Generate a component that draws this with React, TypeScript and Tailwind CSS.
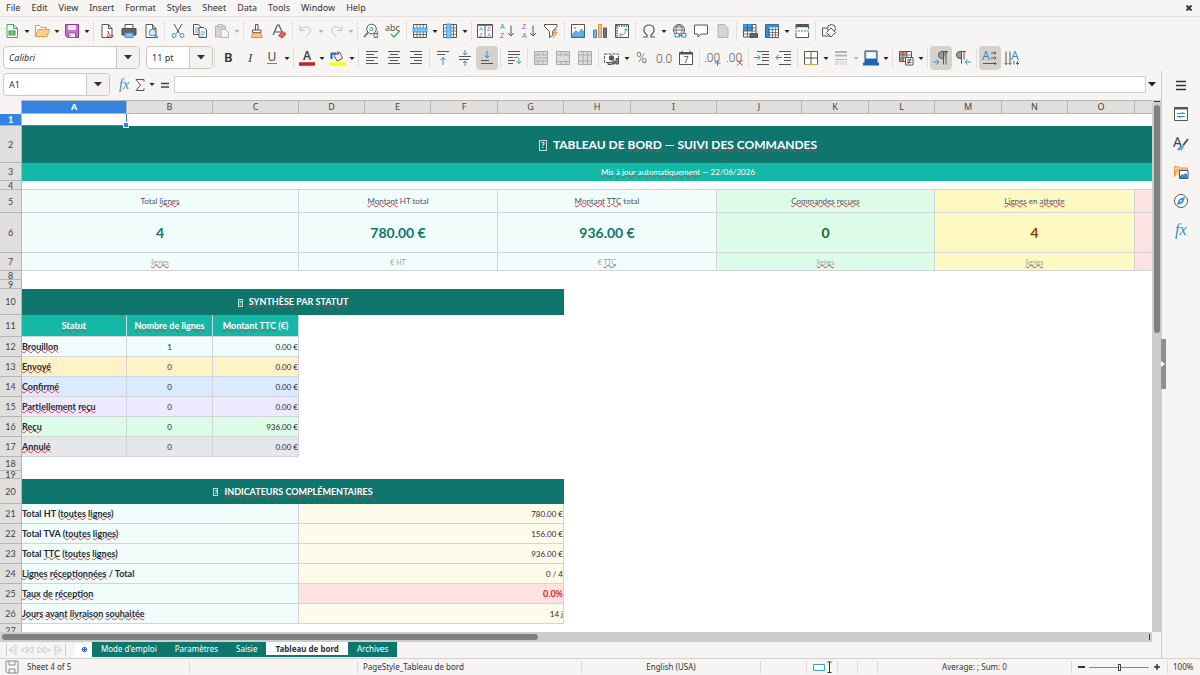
import React from "react";

const ink = "#555555";
const blue = "#2f8fd8";
const lines = (ys: number[], x1 = 2, x2 = 14, color = ink) =>
  ys.map((y) => <path key={y} d={`M${x1} ${y}H${x2}`} stroke={color} />);

const Letter = ({ x, y, size = 8, fill = ink, bold = false, children }: { x: number, y: number, size?: number, fill?: string, bold?: boolean, children: string }) => (
  <text x={x} y={y} fontSize={size} fill={fill} stroke="none" fontFamily="Noto Sans" fontWeight={bold ? 600 : 400}>{children}</text>
);

const SortLetter = ({ x, y, fill, size = 7, children }: { x: number, y: number, fill: string, size?: number, children: string }) => (
  <text x={x} y={y} fontSize={size} fill={fill} stroke="none" fontFamily="Liberation Sans">{children}</text>
);

const icons: Record<string, React.ReactNode> = {
  new: <><path d="M3 1.500h6.500l4 4v9H3z" fill="#fff" stroke="#3faa5c" /><path d="M9.500 1.500v4h4" stroke="#3faa5c" /><path d="M4.500 7.500h7v5h-7z" fill="#2c9a4b" stroke="none" /><path d="M5 9.200h6M5 11h6M8 8v4.500" stroke="#bfe8c9" strokeWidth=".6" /></>,
  open: <><path d="M1.500 13.500v-11h4l1.500 2h5.500v3" fill="#fff" stroke="#e39a43" /><path d="M1.500 13.500l2.500-7h11.500l-2.500 7z" fill="#fbd08f" stroke="#e8a048" /></>,
  save: <><path d="M1.500 1.500h13v13h-11l-2-2z" fill="#c572cf" stroke="#8c3a99" /><path d="M4 2h8v5H4z" fill="#f3e3f5" stroke="none" /><path d="M4.500 10h7v4.500h-7z" fill="#fff" stroke="#8c3a99" strokeWidth=".8" /><path d="M6 11.500v2" stroke="#8c3a99" /></>,
  pdf: <><path d="M3 1.500h6.500l3.500 4v9H3z" fill="#fff" /><path d="M9.500 1.500v4H13" /><path d="M7 15c2-1.500 2.500-5 2-7 1 4 3 5 5.500 5-3-.8-5 .2-7.500 2z" stroke="#e0444c" /></>,
  print: <><path d="M4 5V1.500h8V5" fill="#fff" /><path d="M1 5.500h14v6.500H1z" fill="#5c6670" stroke="#4a4a4a" /><path d="M4 10h8v4.500H4z" fill="#8fc3ea" stroke={blue} /></>,
  preview: <><path d="M3 1.500h6.500l3.500 4v9H3z" fill="#fff" /><path d="M9.500 1.500v4H13" /><circle cx="9.500" cy="9.500" r="3.300" stroke={blue} fill="#d6ebfa" /><path d="M12 12l3 3" stroke={blue} strokeWidth="1.400" /></>,
  cut: <><path d="M4 1l5.500 9.500M12 1L6.500 10.500" /><circle cx="4" cy="12.500" r="2" stroke={blue} /><circle cx="12" cy="12.500" r="2" stroke={blue} /></>,
  copy: <><path d="M1.500 1.500h5l2.500 2.500v7.500H1.500z" fill="#fff" /><path d="M3 5h4M3 7h4M3 9h3" stroke={blue} strokeWidth=".8" /><path d="M7 4.500h5l2.500 2.500v7.500H7z" fill="#fff" /><path d="M8.500 9h4.500M8.500 11h4.500M8.500 13h3" stroke={blue} strokeWidth=".8" /></>,
  paste: <><path d="M1.500 3h10v11h-10z" fill="#d5d5d5" stroke="#b5b5b5" /><path d="M4.500 1.500h4v2.500h-4z" fill="#eee" stroke="#b5b5b5" /><path d="M7 6.500h4.500l3 3v5H7z" fill="#f4f4f4" stroke="#b5b5b5" /></>,
  clone: <><path d="M6.500 7V1.500h2.500V7" fill="#fff" /><path d="M3.500 7h8.500v2.500H3.500z" fill="#fff" /><path d="M3.500 10h8.500l1 4.500H2.500z" fill="#fbc582" stroke="#e08f35" /></>,
  clear: <><path d="M2 12L6.500 2h1.500l3.500 8M4 9h6" strokeWidth="1.200" /><path d="M7.500 12.500l4-4 3.500 2.500-4 4z" fill="#ee5a5f" stroke="#d8333c" /></>,
  undo: <path d="M2 2.500v5h5M2.500 7C6 2 12.500 3.500 12.500 7.500c0 3-3.500 4.500-5 6.500" stroke="#c4c4c4" />,
  redo: <path d="M14 2.500v5H9M13.500 7C10 2 3.500 3.500 3.500 7.500c0 3 3.500 4.500 5 6.500" stroke="#c4c4c4" />,
  find: <><circle cx="8.500" cy="6" r="4.800" fill="#fff" /><path d="M5 9.500L1 14" strokeWidth="1.300" /><SortLetter x={6} y={8} size={8} fill={blue}>a</SortLetter><Letter x={10} y={15} size={9}>d</Letter></>,
  spell: <><Letter x={0} y={8} size={9}>abc</Letter><path d="M6 11l3 3 5.500-6" stroke="#2fb56a" strokeWidth="1.500" /></>,
  row: <><path d="M1.500 1.500h13v13h-13z" fill="#fff" /><path d="M5 1.500v13M8 1.500v13M11.300 1.500v13M1.500 11.500h13" strokeWidth=".8" /><path d="M1 5h14v4H1z" fill="#7fc1f0" stroke={blue} strokeWidth=".8" /></>,
  col: <><path d="M1.500 1.500h13v13h-13z" fill="#fff" /><path d="M1.500 5h13M1.500 8h13M1.500 11.300h13M11.500 1.500v13" strokeWidth=".8" /><path d="M4.500 1h4.500v14H4.500z" fill="#7fc1f0" stroke={blue} strokeWidth=".8" /></>,
  sort: <><path d="M.5 1.500h15v13H.5zM8 1.500v13" fill="#fff" /><path d="M.5 2h15" strokeWidth="1.600" /><SortLetter x={2} y={7.500} size={6} fill={blue}>A</SortLetter><SortLetter x={10} y={7.500} size={6} fill="#b045c8">Z</SortLetter><SortLetter x={2} y={14} size={6} fill="#b045c8">Z</SortLetter><SortLetter x={10} y={14} size={6} fill={blue}>A</SortLetter></>,
  asc: <><SortLetter x={1} y={6} fill={blue}>A</SortLetter><SortLetter x={1} y={15} fill="#b045c8">Z</SortLetter><path d="M12 2.500v10.500M9 10l3 3 3-3" /></>,
  desc: <><SortLetter x={1} y={6} fill="#b045c8">Z</SortLetter><SortLetter x={1} y={15} fill={blue}>A</SortLetter><path d="M12 2.500v10.500M9 10l3 3 3-3" /></>,
  filter: <><path d="M1.500 1.500h12.500v2l-4.500 5v4l-3 2v-6l-5-5z" fill="#fff" /><path d="M12.500 6.500L9 11h2.500L10 15l4.500-5.500H12l2-3z" fill="#f5a742" stroke="#e08f35" strokeWidth=".5" /></>,
  image: <><path d="M1.500 1.500h13v13h-13z" fill="#fff" /><circle cx="5" cy="5" r="1.300" fill="#f5a742" stroke="none" /><path d="M2 14v-2.500l4-4 2.500 2.500 3-4L14 9v5z" fill="#67aee4" stroke={blue} strokeWidth=".7" /></>,
  chart: <><path d="M1.500 7h3v7.500h-3z" fill="#6bb4ea" stroke={blue} /><path d="M6.500 1.500h3v13h-3z" fill="#fac27a" stroke="#e08f35" /><path d="M11.500 5h3v9.500h-3z" fill="#777" /></>,
  pivot: <><path d="M1.500 1.500h13v13h-13z" fill="#fff" /><path d="M2 3h12M3 2v12" strokeWidth="1.500" strokeDasharray="1.500 1" /><path d="M6 12c4 0 6-2 6-6M10.500 7.500L12 5.500l1.800 2M7.500 10.500L5.500 12l2 1.800" stroke={blue} /></>,
  omega: <path d="M2 14h4v-2C1 8.500 2.500 2 8 2s7 6.500 2 10v2h4" strokeWidth="1.200" />,
  link: <><circle cx="8" cy="7" r="5.500" /><path d="M2.500 7h11M8 1.500c-4 3-4 8 0 11M8 1.500c4 3 4 8 0 11M3.500 4h9" strokeWidth=".8" /><path d="M4 10.500h4.500v3.500H4zM10.500 10.500H15v3.500h-4.500z" fill="#f6f5f4" stroke={blue} /><path d="M7 12.300h5" stroke={blue} /></>,
  comment: <path d="M1.500 2h13v9H8l-3 3v-3H1.500z" fill="#fff" />,
  page: <path d="M3 1.500h6.500l3.500 4v9H3z" fill="#d5d5d5" stroke="#b5b5b5" />,
  area: <><path d="M1.500 1.500h12.500v12.500H1.500z" fill="#fff" /><path d="M1.500 1.500h9v6h-9z" fill="#3d9be0" stroke={blue} /><path d="M1.500 5h12.500M1.500 8h12.500M1.500 11h12.500M5.500 1.500v12.500M10 1.500v12.500" strokeWidth=".8" /><path d="M8 10.500h7.500v4H8z" fill="#5c6670" /></>,
  freeze: <><path d="M1.500 1.500h13v13h-13z" fill="#fff" /><path d="M1.500 3h13M3.500 2v12.500" stroke={blue} strokeWidth="3" /><path d="M5.500 5v9.500M8.500 5v9.500M11.500 5v9.500M4 6.500h10.500M4 9.500h10.500M4 12h10.500" strokeWidth=".7" /></>,
  split: <><path d="M2 6V1.500h12.500V6M2 9.500v5h12.500v-5" fill="#fff" /><path d="M2 3h12.500" strokeWidth="2.500" /><path d="M1 8h15" stroke={blue} strokeDasharray="2 1" /></>,
  shapes: <><path d="M1.500 5h8v8h-8z" /><circle cx="10.500" cy="5.500" r="4" fill="#f6f5f4" /><path d="M10 5l4.500 4.500L10 14 5.500 9.500z" fill="#f6f5f4" /></>,
  bold: <Letter x={4} y={12} size={13} fill="#333" bold>B</Letter>,
  italic: <text x="6" y="12" fontSize="13" fill="#444" stroke="none" fontFamily="Liberation Serif" fontStyle="italic">I</text>,
  underline: <><Letter x={3.500} y={11} size={12} fill="#444">U</Letter><path d="M3 13.500h10" stroke={blue} /></>,
  color: <><Letter x={4} y={10} size={12} fill="#444" bold>A</Letter><path d="M0 14h16" stroke="#c5221f" strokeWidth="3.500" /></>,
  highlight: <><path d="M5 5l6-2.500 2.500 6-5.500 2.500z" fill="#fff" /><path d="M2.500 9V3.500h5" stroke="#1c6fb8" strokeWidth="2.200" /><path d="M9 5V1" /><path d="M0 14h16" stroke="#ffff00" strokeWidth="3.500" /></>,
  left: <>{lines([1.500, 7.500, 13.500])}{lines([4.500, 10.500], 2, 10)}</>,
  center: <>{lines([1.500, 7.500, 13.500])}{lines([4.500, 10.500], 4, 12)}</>,
  right: <>{lines([1.500, 7.500, 13.500])}{lines([4.500, 10.500], 6, 14)}</>,
  top: <>{lines([1.500])}{lines([4.500], 2, 10)}<path d="M8 15V7.500M5.500 10L8 7.500l2.500 2.500" stroke={blue} /></>,
  middle: <>{lines([6.500])}{lines([9.500], 2, 12)}<path d="M8 0v5M6 3l2 2 2-2M8 16v-5M6 13l2-2 2 2" stroke={blue} /></>,
  bottom: <>{lines([13.500])}{lines([10.500], 2, 10)}<path d="M8 1v7M5.500 5.500L8 8l2.500-2.500" stroke={blue} /></>,
  wrap: <>{lines([1.500, 4.500])}{lines([7.500, 13.500], 2, 7)}{lines([10.500], 2, 9)}<path d="M8 7.500h3c2 0 2 1 2 6M10.500 11l2.500 2.500 2.500-2.500" stroke={blue} /></>,
  merge: <><path d="M1.500 1.500h13v13h-13z" fill="#ddd" stroke="#aaa" /><path d="M1.500 5h13M1.500 11h13M1.500 8h13M5 1.500V5M10 1.500V5M5 11v3.500M10 11v3.500" stroke="#aaa" /></>,
  center2: <><path d="M1.500 1.500h13v13h-13z" fill="#ddd" stroke="#aaa" /><path d="M1.500 5h13M1.500 11.500h13M6 1.500V5M11 1.500V5M6 11.500v3M11 11.500v3" stroke="#aaa" /></>,
  unmerge: <><path d="M1.500 1.500h13v13h-13z" fill="#ddd" stroke="#aaa" /><path d="M1.500 5h13M1.500 11h13M6 1.500v13M10.500 1.500v13" stroke="#aaa" /></>,
  money: <><path d="M.5 4h14v8.500H.5z" fill="#fff" strokeDasharray="3 1" /><circle cx="7.500" cy="8" r="2.300" fill="#555" /><path d="M9 11h2v3H9zM12 8.500h2.500V14H12z" fill="#888" /><path d="M4 12.500h4v2H4z" fill="#bbb" /></>,
  percent: <text x="2" y="13" fontSize="15" fill={ink} stroke="none" fontFamily="Roboto" fontWeight="300">%</text>,
  number: <text x="0" y="13" fontSize="12" fill={ink} stroke="none" fontFamily="Roboto" fontWeight="300">0.0</text>,
  date: <><path d="M1.500 2.500h13v12h-13z" fill="#fff" /><path d="M1.500 3.500h13" strokeWidth="2" /><path d="M4 .5v3M12 .5v3" /><Letter x={5.500} y={13} size={9}>7</Letter></>,
  addDec: <><text x="-1" y="12" fontSize="12" fill={ink} stroke="none" fontFamily="Roboto" fontWeight="300">.00</text><path d="M12.500 10v6M9.500 13h6" stroke={blue} /></>,
  delDec: <><text x="-1" y="12" fontSize="12" fill={ink} stroke="none" fontFamily="Roboto" fontWeight="300">.00</text><path d="M10 10l5.500 5.500M15.500 10L10 15.500" stroke="#e0444c" /></>,
  indent: <>{lines([1.500, 14.500], 3, 15)}{lines([4.500, 7.500, 10.500], 8, 15)}<path d="M0 7.500h6M3.500 5L6 7.500 3.500 10" stroke={blue} /></>,
  outdent: <>{lines([1.500, 14.500], 3, 15)}{lines([4.500, 7.500, 10.500], 8, 15)}<path d="M6 7.500H0M2.500 5L0 7.500 2.500 10" stroke={blue} /></>,
  borders: <><path d="M1.500 1.500h13v13h-13zM8 1.500v13M1.500 8h13" fill="#fff" /><path d="M1.500 14.500h13" stroke="#e8a048" /></>,
  lineStyle: <><path d="M2 2h12M2 5.500h12" stroke="#b5b5b5" strokeWidth="2" /><path d="M2 9.500h12" stroke="#b5b5b5" /><path d="M2 12h12M2 14h12" stroke="#b5b5b5" strokeDasharray="1.500 1" /></>,
  lineColor: <><path d="M2.500 1.500h11v7.500h-11z" fill="#fff" stroke="#6db1e6" strokeWidth="1.500" /><path d="M2 1h12v8.500H2z" /><path d="M0 14h16M1.500 11h13" stroke="#1f66ad" strokeWidth="3" /></>,
  cond: <><path d="M1.500 1.500h12v10h-12z" fill="#fff" /><path d="M2 2h7v3H2z" fill="#ef7d80" stroke="none" /><path d="M2 5h7v3H2z" fill="#8fd6a3" stroke="none" /><path d="M2 8h4v3H2z" fill="#ef7d80" stroke="none" /><path d="M1.500 5h12M1.500 8h12M5 1.500v10M9 1.500v10" strokeWidth=".7" /><path d="M7.500 7.500h7.500v7.500H7.500z" fill="#fff" /><path d="M9 10h4.500M9 12.500h4.500M12.500 8.500l-2.500 5.500" /></>,
  ltr: <><path d="M15 1.500H9a3.300 3.300 0 000 7h1.500z" fill="#999" stroke="none" /><path d="M15 1.500H9a3.300 3.300 0 000 7h1M10.500 1.500v13M13 1.500v13" /><path d="M0 12h6M3.500 9.500L6 12l-2.500 2.500" stroke={blue} /></>,
  rtl: <><path d="M6.500 1.500H5a3.300 3.300 0 000 7h1.500z" fill="#999" stroke="none" /><path d="M11 1.500H5a3.300 3.300 0 000 7h1M6.500 1.500v12M9 1.500v8" /><path d="M16 12h-6M12.500 9.500L10 12l2.500 2.500" stroke={blue} /></>,
  textH: <><Letter x={0} y={10} size={12} fill={blue}>A</Letter><path d="M9 3h5M12.500 1.500L14 3l-1.500 1.500M9 8h5M12.500 6.500L14 8l-1.500 1.500M1 13.500h13M12.500 12l1.500 1.500-1.500 1.500" /></>,
  textV: <><Letter x={7} y={10} size={12} fill={blue}>A</Letter><path d="M2 1.500v13M.5 13L2 14.500 3.500 13M6 1.500v13M4.500 13L6 14.500 7.500 13M10 11v3.500M13.500 11v3.500M12 13l1.500 1.500L15 13" /></>,
  menu: <path d="M3 4.500h10M3 8.500h10M3 12.500h10" stroke="#333" strokeWidth="1.500" />,
  props: <><path d="M1.500 1.500h13v13h-13z" fill="#fff" /><path d="M1.500 2.500h13" strokeWidth="2" /><path d="M4 7.500h8M10 6L8.500 7.500M4 10.500h8M6 12l2-1.500" stroke={blue} /></>,
  styles: <><Letter x={0} y={12} size={14} fill="#444">A</Letter><path d="M15 4l-5 6.500" strokeWidth="2" /><path d="M4.500 14.500c3 .8 5.500 0 5.500-3l-2-.5c-1.500 0-1 2.500-3.500 3.500z" fill="#6db1e6" stroke={blue} /></>,
  gallery: <><path d="M1.500 12.500v-10h4l1 1.500h8v2" fill="#fbd08f" stroke="#e39a43" /><path d="M1.500 12.500l2-6.500h11" fill="#fbd08f" stroke="#e39a43" /><path d="M6.500 6.500h8.500v8H6.500z" fill="#fff" /><path d="M7 14v-2l2-2 1.500 1 2-2 2 2v3z" fill={blue} stroke="none" /></>,
  nav: <><circle cx="8" cy="8" r="6.500" fill="#fff" /><path d="M11.500 4.500L9.500 9.500 4.500 11.500 6.500 6.500z" fill={blue} stroke={blue} /><circle cx="8" cy="8" r=".9" fill="#fff" stroke="none" /></>,
  fx: <text x="2" y="13" fontSize="16" fill={blue} stroke="none" fontFamily="Liberation Serif" fontStyle="italic">fx</text>,
  fxSmall: <text x="3" y="12" fontSize="14" fill={blue} stroke="none" fontFamily="Liberation Serif" fontStyle="italic">fx</text>,
  sum: <path d="M12 4.500V2.500H4l4.500 5.500L4 13.500h8v-2" />,
  equal: <path d="M4 6.500h8M4 10h8" stroke="#444" strokeWidth="1.500" />,
  saved: <><path d="M2 2h12v12H3.500L2 12.500z" stroke="#8a8a8a" /><path d="M5 2v4h6V2M5 14v-4h6v4" stroke="#8a8a8a" /></>,
  close: <path d="M5.500 5.500l5 5M10.500 5.500l-5 5" stroke="#333" strokeWidth="1.800" />,
};

const Icon = ({ name }: { name: string }) => (
  <svg viewBox="0 0 16 16" fill="none" stroke={ink} className="size-4 shrink-0 overflow-visible">{icons[name]}</svg>
);

const Caret = ({ dim }: { dim?: boolean }) => (
  <svg viewBox="0 0 6 4" className={`h-1 w-1.5 shrink-0 ${dim ? "fill-[#b5b5b5]" : "fill-[#222222]"}`}><path d="M.5 0h5L3 3z" /></svg>
);

type Tool = { icon: string, label: string, menu?: boolean, on?: boolean, dim?: boolean };

const standardBar: Tool[][] = [
  [{ icon: "new", label: "New", menu: true }, { icon: "open", label: "Open", menu: true }, { icon: "save", label: "Save", menu: true }],
  [{ icon: "pdf", label: "Export as PDF" }, { icon: "print", label: "Print" }, { icon: "preview", label: "Print preview" }],
  [{ icon: "cut", label: "Cut" }, { icon: "copy", label: "Copy" }, { icon: "paste", label: "Paste", menu: true, dim: true }],
  [{ icon: "clone", label: "Clone formatting" }, { icon: "clear", label: "Clear formatting" }],
  [{ icon: "undo", label: "Undo", menu: true, dim: true }, { icon: "redo", label: "Redo", menu: true, dim: true }],
  [{ icon: "find", label: "Find and replace" }, { icon: "spell", label: "Spelling" }],
  [{ icon: "row", label: "Row", menu: true }, { icon: "col", label: "Column", menu: true }],
  [{ icon: "sort", label: "Sort" }, { icon: "asc", label: "Sort ascending" }, { icon: "desc", label: "Sort descending" }, { icon: "filter", label: "AutoFilter" }],
  [{ icon: "image", label: "Insert image" }, { icon: "chart", label: "Insert chart" }, { icon: "pivot", label: "Pivot table" }],
  [{ icon: "omega", label: "Special character", menu: true }, { icon: "link", label: "Hyperlink" }, { icon: "comment", label: "Comment" }, { icon: "page", label: "Headers and footers", dim: true }],
  [{ icon: "area", label: "Print area" }, { icon: "freeze", label: "Freeze", menu: true }, { icon: "split", label: "Split window" }],
  [{ icon: "shapes", label: "Draw functions" }],
];

const formatBar: Tool[][] = [
  [{ icon: "bold", label: "Bold" }, { icon: "italic", label: "Italic" }, { icon: "underline", label: "Underline", menu: true }],
  [{ icon: "color", label: "Font color", menu: true }, { icon: "highlight", label: "Background color", menu: true }],
  [{ icon: "left", label: "Align left" }, { icon: "center", label: "Center" }, { icon: "right", label: "Align right" }],
  [{ icon: "top", label: "Align top" }, { icon: "middle", label: "Center vertically" }, { icon: "bottom", label: "Align bottom", on: true }],
  [{ icon: "wrap", label: "Wrap text" }],
  [{ icon: "merge", label: "Merge and center" }, { icon: "center2", label: "Merge cells" }, { icon: "unmerge", label: "Unmerge cells" }],
  [{ icon: "money", label: "Currency", menu: true }, { icon: "percent", label: "Percent" }, { icon: "number", label: "Number" }, { icon: "date", label: "Date" }],
  [{ icon: "addDec", label: "Add decimal" }, { icon: "delDec", label: "Delete decimal" }],
  [{ icon: "indent", label: "Increase indent" }, { icon: "outdent", label: "Decrease indent" }],
  [{ icon: "borders", label: "Borders", menu: true }, { icon: "lineStyle", label: "Border style", menu: true, dim: true }, { icon: "lineColor", label: "Border color", menu: true }],
  [{ icon: "cond", label: "Conditional", menu: true }],
  [{ icon: "ltr", label: "Left to right", on: true }, { icon: "rtl", label: "Right to left" }],
  [{ icon: "textH", label: "Horizontal text", on: true }, { icon: "textV", label: "Vertical text" }],
];

const ToolGroups = ({ groups }: { groups: Tool[][] }) => (
  <>
    {groups.map((group, i) => (
      <React.Fragment key={i}>
        {i > 0 && <div className="mx-0.5 h-5 w-px shrink-0 bg-[#e2e0de]" />}
        {group.map((tool) => (
          <div key={tool.icon} className="flex shrink-0 items-center">
            <button aria-label={tool.label} className={`flex h-6 w-[22px] items-center justify-center rounded ${tool.on ? "bg-[#d5d1cd]" : ""}`}>
              <Icon name={tool.icon} />
            </button>
            {tool.menu && <button aria-label={`${tool.label} options`} className="flex h-6 w-2 items-center justify-center pt-0.5"><Caret dim={tool.dim} /></button>}
          </div>
        ))}
      </React.Fragment>
    ))}
  </>
);

type ComboProps = { label: string, value: string, width: string, italic?: boolean };

const Combo = ({ label, value, width, italic }: ComboProps) => (
  <div className={`flex h-[23px] shrink-0 overflow-hidden rounded border border-[#cdc7c2] bg-white ${width}`}>
    <input aria-label={label} defaultValue={value} className={`min-w-0 flex-1 pl-[5px] text-[9px] outline-none ${italic ? "italic" : ""}`} />
    <button aria-label={`${label} list`} className="flex w-[23px] items-center justify-center border-l border-[#cdc7c2] bg-[#f3f2f1]">
      <svg viewBox="0 0 8 5" className="h-[5px] w-2 fill-[#333333]"><path d="M0 0h8L4 4.500z" /></svg>
    </button>
  </div>
);

// words between ~ get the red spelling wave
const Spell = ({ text }: { text: string }) => (
  <>
    {text.split("~").map((part, i) =>
      i % 2 ? <span key={i} className="underline decoration-[#d9363e] decoration-wavy decoration-1 -underline-offset-1 [text-decoration-skip-ink:none]">{part}</span> : part
    )}
  </>
);

const Tofu = ({ big }: { big?: boolean }) => (
  <span className={`inline-block border border-[#c3dedb] text-center align-middle font-bold ${big ? "mr-1.5 h-[11px] w-2 text-[8px] leading-[9px]" : "mr-1 h-2 w-[5px] text-[6px] leading-[6px]"}`}>?</span>
);

const RowHead = ({ n, active }: { n: number, active?: boolean }) => (
  <th scope="row" className={`border-r border-b border-[#b8b6b4] p-0 text-[9px] leading-[7px] ${active ? "bg-[#3584e4] font-bold text-white" : "bg-[#e1dfdd] font-normal text-[#444444]"}`}>{n}</th>
);

const colWidths = ["w-[22px]", "w-[105px]", "w-[86px]", "w-[86px]", "w-[66px]", "w-[66px]", "w-[67px]", "w-[66px]", "w-[67px]", "w-[86px]", "w-[85px]", "w-[67px]", "w-[66px]", "w-[67px]", "w-[66px]", "w-[67px]", "w-[66px]", "w-[66px]", "w-[67px]"];
const letters = "ABCDEFGHIJKLMNO".split("");

const kpis = [
  { span: 3, label: "Total ~lignes~", value: "4", unit: "~lignes~", bg: "bg-[#f0fdfa]", color: "text-[#0f766e]" },
  { span: 3, label: "~Montant~ HT total", value: "780.00 €", unit: "€ HT", bg: "bg-[#f0fdfa]", color: "text-[#0f766e]" },
  { span: 3, label: "~Montant~ ~TTC~ total", value: "936.00 €", unit: "€ ~TTC~", bg: "bg-[#f0fdfa]", color: "text-[#0f766e]" },
  { span: 3, label: "~Commandes~ ~reçues~", value: "0", unit: "~lignes~", bg: "bg-[#dcfce7]", color: "text-[#166534]" },
  { span: 3, label: "~Lignes~ en ~attente~", value: "4", unit: "~lignes~", bg: "bg-[#fef9c3]", color: "text-[#92400e]" },
  { span: 3, label: "", value: "", unit: "", bg: "bg-[#fee2e2]", color: "text-[#991b1b]" },
];

const statuses = [
  { name: "~Brouillon~", count: 1, total: "0.00 €", bg: "bg-[#f0fdfa]" },
  { name: "~Envoyé~", count: 0, total: "0.00 €", bg: "bg-[#fef3c7]" },
  { name: "~Confirmé~", count: 0, total: "0.00 €", bg: "bg-[#dbeafe]" },
  { name: "~Partiellement~ ~reçu~", count: 0, total: "0.00 €", bg: "bg-[#ede9fe]" },
  { name: "~Reçu~", count: 0, total: "936.00 €", bg: "bg-[#dcfce7]" },
  { name: "~Annulé~", count: 0, total: "0.00 €", bg: "bg-[#e5e7eb]" },
];

const indicators = [
  { name: "Total HT (~toutes~ ~lignes~)", value: "780.00 €" },
  { name: "Total TVA (~toutes~ ~lignes~)", value: "156.00 €" },
  { name: "Total ~TTC~ (~toutes~ ~lignes~)", value: "936.00 €" },
  { name: "~Lignes~ ~réceptionnées~ / Total", value: "0 / 4" },
  { name: "~Taux~ ~de~ ~réception~", value: "0.0%", alert: true },
  { name: "~Jours~ ~avant~ ~livraison~ ~souhaitée~", value: "14 j" },
];

const line = "border-r border-b border-[#d1d5db]";

const Sheet = () => (
  <table className="w-[1334px] table-fixed border-separate border-spacing-0 font-['Lato',sans-serif] text-[8px] leading-[10px] text-[#1f2937]">
    <colgroup>{colWidths.map((w, i) => <col key={i} className={w} />)}</colgroup>
    <thead>
      <tr className="h-3.5 font-['Noto_Sans',sans-serif] text-[9px]">
        <td className="border-r border-[#b8b6b4] bg-[#f6f5f4] p-0" />
        {letters.map((l) => (
          <th key={l} scope="col" className={`border-t border-r border-b border-[#b8b6b4] p-0 ${l === "A" ? "bg-[#3584e4] font-bold text-white" : "bg-[#e1dfdd] font-normal text-[#444444]"}`}>{l}</th>
        ))}
        <td colSpan={3} className="border-t border-b border-[#b8b6b4] bg-[#e1dfdd] p-0" />
      </tr>
    </thead>
    <tbody>
      <tr className="h-3">
        <RowHead n={1} active />
        <td className="relative border-r border-b border-[#3584e4] p-0">
          <span className="absolute -right-0.5 -bottom-0.5 size-1 bg-[#3584e4] ring-1 ring-white" />
        </td>
        <td colSpan={17} className="p-0" />
      </tr>
      <tr className="h-[37px]">
        <RowHead n={2} />
        <td colSpan={18} className="bg-[#0f766e] p-0 text-center text-[12px] leading-4 font-bold text-white"><Tofu big /><Spell text="TABLEAU DE ~BORD~ — ~SUIVI~ ~DES~ ~COMMANDES~" /></td>
      </tr>
      <tr className="h-[18px]">
        <RowHead n={3} />
        <td colSpan={18} className="bg-[#14b8a6] p-0 text-center text-white"><Spell text="~Mis~ ~à~ ~jour~ ~automatiquement~ — 22/06/2026" /></td>
      </tr>
      <tr className="h-[9px]"><RowHead n={4} /><td colSpan={18} className="border-b border-[#d1d5db] p-0" /></tr>
      <tr className="h-[23px]">
        <RowHead n={5} />
        {kpis.map((k, i) => <td key={i} colSpan={k.span} className={`p-0 text-center text-[#4b5563] ${line} ${k.bg}`}><Spell text={k.label} /></td>)}
      </tr>
      <tr className="h-10">
        <RowHead n={6} />
        {kpis.map((k, i) => <td key={i} colSpan={k.span} className={`p-0 text-center text-[14px] leading-5 font-bold ${line} ${k.bg} ${k.color}`}>{k.value}</td>)}
      </tr>
      <tr className="h-[18px]">
        <RowHead n={7} />
        {kpis.map((k, i) => <td key={i} colSpan={k.span} className={`p-0 text-center text-[7px] text-[#9ca3af] ${line} ${k.bg}`}><Spell text={k.unit} /></td>)}
      </tr>
      <tr className="h-[9px]"><RowHead n={8} /><td colSpan={18} className="p-0" /></tr>
      <tr className="h-[9px]"><RowHead n={9} /><td colSpan={18} className="p-0" /></tr>
      <tr className="h-[26px]">
        <RowHead n={10} />
        <td colSpan={7} className="bg-[#0f766e] p-0 text-center text-[9px] font-bold text-white"><Tofu /><Spell text=" ~SYNTHÈSE~ PAR ~STATUT~" /></td>
        <td colSpan={11} className="p-0" />
      </tr>
      <tr className="h-[22px] text-[9px] text-white">
        <RowHead n={11} />
        {["~Statut~", "~Nombre~ ~de~ ~lignes~", "~Montant~ ~TTC~ (€)"].map((h) => (
          <th key={h} scope="col" className="border-r border-b border-[#d1d5db] bg-[#14b8a6] p-0 text-center font-bold"><Spell text={h} /></th>
        ))}
        <td colSpan={15} className="p-0" />
      </tr>
      {statuses.map((s, i) => (
        <tr key={s.name} className="h-5">
          <RowHead n={12 + i} />
          <td className={`p-0 text-[9px] font-bold ${line} ${s.bg}`}><Spell text={s.name} /></td>
          <td className={`p-0 text-center ${line} ${s.bg}`}>{s.count}</td>
          <td className={`p-0 text-right ${line} ${s.bg}`}>{s.total}</td>
          <td colSpan={15} className="p-0" />
        </tr>
      ))}
      <tr className="h-3.5"><RowHead n={18} /><td colSpan={18} className="p-0" /></tr>
      <tr className="h-2"><RowHead n={19} /><td colSpan={18} className="p-0" /></tr>
      <tr className="h-[25px]">
        <RowHead n={20} />
        <td colSpan={7} className="bg-[#0f766e] p-0 text-center text-[9px] font-bold text-white"><Tofu /><Spell text=" ~INDICATEURS~ ~COMPLÉMENTAIRES~" /></td>
        <td colSpan={11} className="p-0" />
      </tr>
      {indicators.map((d, i) => (
        <tr key={d.name} className="h-5">
          <RowHead n={21 + i} />
          <td colSpan={3} className={`bg-[#f0fdfa] p-0 text-[9px] font-bold ${line}`}><Spell text={d.name} /></td>
          <td colSpan={4} className={`p-0 text-right ${line} ${d.alert ? "bg-[#fee2e2] text-[9px] font-bold text-[#dc2626]" : "bg-[#fffbeb]"}`}>{d.value}</td>
          <td colSpan={11} className="p-0" />
        </tr>
      ))}
      <tr className="h-3.5"><RowHead n={27} /><td colSpan={18} className="p-0" /></tr>
    </tbody>
  </table>
);

const menus = ["File", "Edit", "View", "Insert", "Format", "Styles", "Sheet", "Data", "Tools", "Window", "Help"];
const tabs = ["Mode d'emploi", "Paramètres", "Saisie", "Tableau de bord", "Archives"];
const sidebar = [["menu", "Sidebar settings"], ["props", "Properties"], ["styles", "Styles"], ["gallery", "Gallery"], ["nav", "Navigator"], ["fx", "Functions"]];

export default function App() {
  return (
    <div className="flex h-screen flex-col overflow-hidden bg-[#f6f5f4] font-['Noto_Sans',sans-serif] text-[9px] text-[#333333]">
      <nav className="flex h-[17px] shrink-0 items-center gap-[11px] border-b border-[#e4e2e0] pr-[3px] pl-1.5">
        {menus.map((m) => <button key={m} className="leading-4">{m}</button>)}
        <button aria-label="Close document" className="ml-auto"><Icon name="close" /></button>
      </nav>
      <div className="flex h-[27px] shrink-0 items-center pl-px"><ToolGroups groups={standardBar} /></div>
      <div className="flex h-[27px] shrink-0 items-center pl-[3px]">
        <Combo label="Font name" value="Calibri" width="w-[137px]" italic />
        <div className="mr-px ml-1.5 flex"><Combo label="Font size" value="11 pt" width="w-[67px]" /></div>
        <div className="mr-0.5 h-5 w-px bg-[#e2e0de]" />
        <ToolGroups groups={formatBar} />
      </div>

      <div className="flex min-h-0 flex-1">
        <div className="flex min-w-0 flex-1 flex-col">
          <div className="flex h-[29px] shrink-0 items-center pb-0.5 pl-[3px]">
            <Combo label="Name box" value="A1" width="w-[107px]" />
            <button aria-label="Function wizard" className="ml-1.5"><Icon name="fxSmall" /></button>
            <button aria-label="Select function" className="flex items-center"><Icon name="sum" /><span className="pl-px"><Caret /></span></button>
            <button aria-label="Formula" className="mr-px ml-0.5"><Icon name="equal" /></button>
            <input aria-label="Input line" className="h-[17px] min-w-0 flex-1 border border-[#d5d1cd] bg-white px-1 outline-none" />
            <button aria-label="Expand formula bar" className="flex w-[15px] justify-center pr-1"><svg viewBox="0 0 8 5" className="h-[5px] w-2 shrink-0 fill-[#222222]"><path d="M0 0h8L4 4.500z" /></svg></button>
          </div>
          <div className="flex min-h-0 flex-1">
            <div className="min-w-0 flex-1 overflow-hidden bg-white"><Sheet /></div>
            <div className="flex w-[9px] flex-col items-center bg-[#cdcdcd] pt-px">
              <div className="mb-[3px] h-px w-1.5 bg-[#333333]" />
              <div className="h-[43%] w-1.5 rounded-full bg-[#808080]" />
            </div>
          </div>
          <div className="mr-[9px] flex h-2.5 shrink-0 items-center bg-[#cdcdcd] pr-0.5 pl-0.5">
            <div className="h-1.5 w-7/15 rounded-full bg-[#808080]" />
            <div className="ml-auto h-1.5 w-px bg-[#333333]" />
          </div>
          <div className="flex h-4 shrink-0 items-start">
            <svg viewBox="0 0 62 12" fill="none" stroke="#cfcdcb" className="mt-0.5 ml-[5px] h-3 w-[62px]">
              <path d="M1.500 0v12M4.500 6h6M11 1L4 6l7 5zM22 3l-6 3 6 3zM28 3l-6 3 6 3zM33 3l6 3-6 3zM39 3l6 3-6 3zM50 1l7 5-7 5zM50 6h6M60.500 0v12" />
            </svg>
            <button aria-label="Add sheet" className="ml-2 flex h-[15px] w-[17px] items-center bg-white">
              <svg viewBox="0 0 17 15" fill="none"><path d="M0 0h7l4 4" stroke="#ddd" /><circle cx="9.500" cy="7.500" r="2.200" stroke="#2f5fa8" /><path d="M9.500 5.500v4M7.500 7.500h4" stroke="#2f5fa8" /></svg>
            </button>
            <div className="flex h-[15px] bg-[#0f766e] text-white">
              {tabs.map((t) => (
                <button key={t} className={`px-[9px] text-[8px] leading-[13px] ${t === "Tableau de bord" ? "mb-0.5 bg-white font-bold text-[#333333]" : "mb-0.5"}`}>{t}</button>
              ))}
            </div>
          </div>
        </div>
        <aside className="relative flex w-[39px] shrink-0 flex-col items-center gap-[13px] border-l border-[#cfcdcb] pt-1.5">
          {sidebar.map(([icon, label]) => <button key={icon} aria-label={label}><Icon name={icon} /></button>)}
          <button aria-label="Collapse sidebar" className="absolute top-[268px] -left-px flex h-[50px] w-[5px] items-center bg-[#8f8f8f]">
            <svg viewBox="0 0 4 6" className="h-1.5 w-1 fill-white"><path d="M0 0l4 3-4 3z" /></svg>
          </button>
        </aside>
      </div>

      <footer className="flex h-[17px] shrink-0 items-center border-t border-[#d5d1cd] text-[8px] whitespace-nowrap *:h-3 *:leading-3">
        <div className="-mt-1 w-[22px] pl-1"><Icon name="saved" /></div>
        <div className="w-[168px] border-r border-[#dedcda] pl-[5px]">Sheet 4 of 5</div>
        <div className="w-[168px] border-r border-[#dedcda]" />
        <div className="w-56 border-r border-[#dedcda] pl-[5px]">PageStyle_Tableau de bord</div>
        <div className="w-[179px] border-r border-[#dedcda] text-center">English (USA)</div>
        <div className="w-[46px] border-r border-[#dedcda]" />
        <div className="w-[31px] border-r border-[#dedcda] pl-1.5">
          <svg viewBox="0 0 20 12" fill="none" className="h-3 w-5"><path d="M.5 3.500h11v6H.5z" stroke="#3d9be0" fill="#fff" /><path d="M14.500 1h4M14.500 11.500h4M16.500 1v10.500" stroke="#333" /></svg>
        </div>
        <div className="w-5 border-r border-[#dedcda]" />
        <div className="w-5 border-r border-[#dedcda]" />
        <div className="flex-1 border-r border-[#dedcda] text-center">Average: ; Sum: 0</div>
        <div className="flex w-24 items-center gap-1 border-r border-[#dedcda] px-1.5">
          <button aria-label="Zoom out" className="h-0.5 w-[7px] bg-[#333333]" />
          <input type="range" aria-label="Zoom" defaultValue={50} className="h-3 min-w-0 flex-1 appearance-none bg-transparent [&::-webkit-slider-runnable-track]:h-px [&::-webkit-slider-runnable-track]:bg-[#888888] [&::-webkit-slider-thumb]:-mt-[3px] [&::-webkit-slider-thumb]:h-[7px] [&::-webkit-slider-thumb]:w-[3px] [&::-webkit-slider-thumb]:appearance-none [&::-webkit-slider-thumb]:border [&::-webkit-slider-thumb]:border-[#444444] [&::-webkit-slider-thumb]:bg-white" />
          <button aria-label="Zoom in"><svg viewBox="0 0 8 8" className="size-2" stroke="#333" strokeWidth="1.500"><path d="M1 4h6M4 1v6" /></svg></button>
        </div>
        <div className="w-8 pl-[5px]">100%</div>
      </footer>
    </div>
  );
}
